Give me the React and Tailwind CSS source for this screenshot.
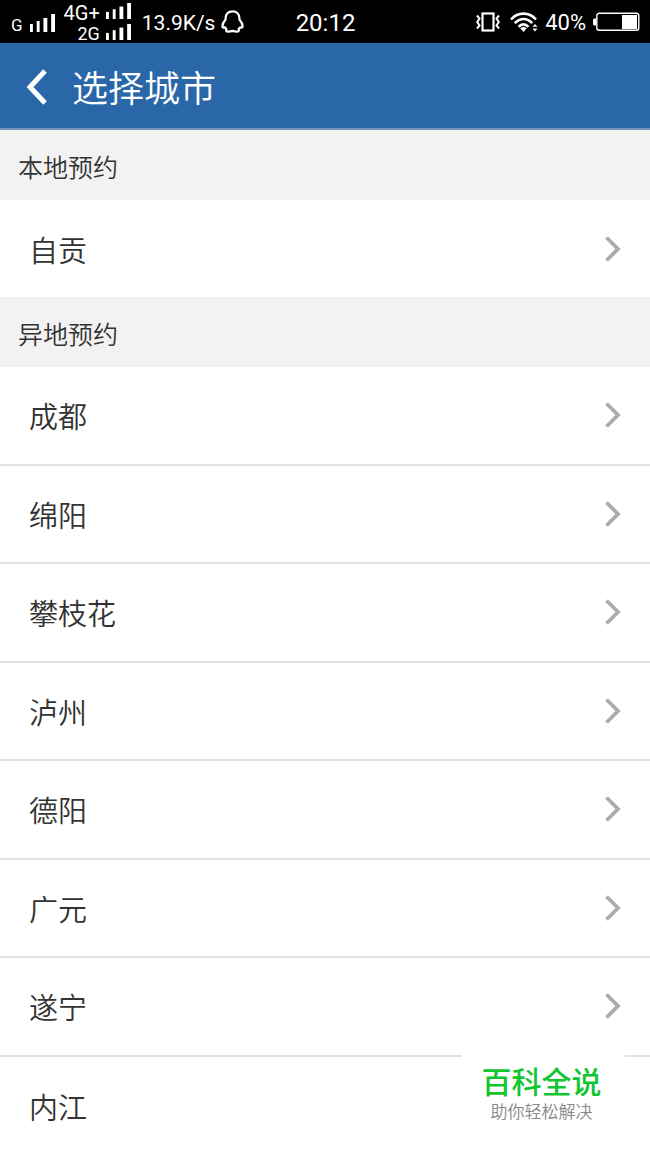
const remoteCities = ['成都', '绵阳', '攀枝花', '泸州', '德阳', '广元', '遂宁', '内江'];

function Signal({ className }) {
  return (
    <svg className={className} viewBox="0 0 26 18" preserveAspectRatio="none" fill="currentColor" aria-hidden="true">
      <rect x="0" y="10" width="3" height="8" />
      <rect x="7" y="7" width="3" height="11" />
      <rect x="14" y="4" width="4" height="14" />
      <rect x="22" y="0" width="4" height="18" />
    </svg>
  );
}

function StatusBar() {
  return (
    <div className="flex h-[43px] shrink-0 items-center justify-between bg-black pr-[10px] pl-[11px] font-['Roboto','Noto_Sans_CJK_SC',sans-serif] font-normal text-white">
      <div className="flex flex-1 items-center">
        <span className="pt-1.5 text-[17px] leading-5">G</span>
        <Signal className="mt-[3px] ml-[7px] h-[18px] w-[25px]" />
        <div className="ml-[9px] flex flex-col items-end">
          <div className="flex h-[21px] items-center gap-[6px]">
            <span className="pt-1 text-[20px] leading-5">4G+</span>
            <Signal className="h-[16px] w-[25px]" />
          </div>
          <div className="flex h-[21px] items-center gap-[6px]">
            <span className="pt-1 text-[18px] leading-5">2G</span>
            <Signal className="h-[16px] w-[25px]" />
          </div>
        </div>
        <span className="ml-[11px] pt-0.5 text-[21px] leading-6">13.9K/s</span>
        <svg className="ml-[6px] h-[23px] w-[23px]" viewBox="0 0 23 23" fill="none" stroke="currentColor" strokeWidth="2.2" strokeLinejoin="round" strokeLinecap="round" aria-hidden="true">
          <path d="M11.5 1.4C7.2 1.4 4.6 4.2 4.6 8V9.4C2.8 11.4 1.4 14.2 1.4 16.3C1.4 17.6 2.4 17.8 3.8 17.4C4.2 18 4.8 18.5 5.4 18.9C4.6 20.4 5.2 21.6 7.2 21.6C9 21.6 10.3 21.3 11.5 20.9C12.7 21.3 14 21.6 15.8 21.6C17.8 21.6 18.4 20.4 17.6 18.9C18.2 18.5 18.8 18 19.2 17.4C20.6 17.8 21.6 17.6 21.6 16.3C21.6 14.2 20.2 11.4 18.4 9.4V8C18.4 4.2 15.8 1.4 11.5 1.4Z" />
        </svg>
      </div>
      <span className="pt-0.5 text-[24px] leading-6">20:12</span>
      <div className="flex flex-1 items-center justify-end">
        <svg className="h-[20px] w-[24px]" viewBox="0 0 24 20" fill="none" stroke="currentColor" strokeWidth="2.2" aria-hidden="true">
          <rect x="6.5" y="1.5" width="11" height="17" />
          <path d="M1 3.5L3.5 6.5L1.2 10L3.5 13.5L1 16.5M23 3.5L20.5 6.5L22.8 10L20.5 13.5L23 16.5" strokeWidth="2" />
        </svg>
        <svg className="ml-[10px] h-[20px] w-[28px]" viewBox="0 0 28 20" fill="none" stroke="currentColor" strokeWidth="2.6" aria-hidden="true">
          <path d="M1 7.5C8 -0.3 19 -0.3 26 7.5M4.8 11.2C10 5.6 17 5.6 22.2 11.2M8.6 14.8C11.5 11.6 15.5 11.6 18.4 14.8" />
          <path d="M10.3 16.2Q13.5 13.8 16.7 16.2L13.5 20Z" fill="currentColor" stroke="none" />
          <path d="M22.5 14.8L25 12L27.5 14.8ZM22.5 16.4L25 19.4L27.5 16.4Z" fill="currentColor" stroke="none" />
        </svg>
        <span className="ml-[7px] pt-0.5 text-[22px] leading-6">40%</span>
        <svg className="ml-[7px] h-[20px] w-[47px]" viewBox="0 0 47 20" fill="none" aria-hidden="true">
          <rect x="3.8" y="1.3" width="42" height="17" rx="2.5" stroke="currentColor" strokeWidth="1.4" />
          <path d="M3 6.5H1.5Q0 6.5 0 8V12Q0 13.5 1.5 13.5H3Z" fill="currentColor" />
          <rect x="29" y="3" width="15" height="14" fill="currentColor" />
        </svg>
      </div>
    </div>
  );
}

function CityRow({ name }) {
  return (
    <a href="#" className="flex h-full items-center justify-between pr-[29px] pl-[29px] text-[29px] leading-10">
      <span>{name}</span>
      <svg className="h-[28px] w-[17px] text-[#ababab]" viewBox="0 0 17 28" fill="none" stroke="currentColor" strokeWidth="3.8" aria-hidden="true">
        <path d="M2.5 2.5L14 14L2.5 25.5" />
      </svg>
    </a>
  );
}

function SectionTitle({ children }) {
  return (
    <h2 className="flex h-[70px] shrink-0 items-center bg-[#f2f2f2] px-[18px] pt-0.5 text-[25px] leading-9">
      {children}
    </h2>
  );
}

export default function App() {
  return (
    <div className="relative flex min-h-screen flex-col bg-white font-['Noto_Sans_CJK_SC_DemiLight','Noto_Sans_CJK_SC',sans-serif] font-[350] text-[#333333]">
      <StatusBar />
      <header className="flex h-[87px] shrink-0 items-center border-b-2 border-[#7796bd] bg-[#2a67a8] pl-[25px] text-white">
        <button type="button" aria-label="返回" className="mt-0.5">
          <svg className="h-[36px] w-[22px]" viewBox="0 0 22 36" fill="none" stroke="currentColor" strokeWidth="5" aria-hidden="true">
            <path d="M20 2L5 18L20 34" />
          </svg>
        </button>
        <h1 className="ml-[25px] text-[36px] leading-[48px]">选择城市</h1>
      </header>
      <main className="flex flex-1 flex-col">
        <SectionTitle>本地预约</SectionTitle>
        <div className="h-[97px] shrink-0">
          <CityRow name="自贡" />
        </div>
        <SectionTitle>异地预约</SectionTitle>
        <ul className="grid flex-1 auto-rows-fr divide-y-2 divide-[#e2e2e2]">
          {remoteCities.map((name) => (
            <li key={name} className="min-h-[98px]">
              <CityRow name={name} />
            </li>
          ))}
        </ul>
      </main>
      <aside className="absolute right-[25px] bottom-[20px] flex h-[86px] w-[163px] flex-col items-center bg-white pt-[10px] pr-1">
        <strong className="font-['Noto_Sans_CJK_SC',sans-serif] text-[30px] leading-[42px] font-medium text-[#12c632]">百科全说</strong>
        <span className="text-[17px] leading-5 text-[#888888]">助你轻松解决</span>
      </aside>
    </div>
  );
}
